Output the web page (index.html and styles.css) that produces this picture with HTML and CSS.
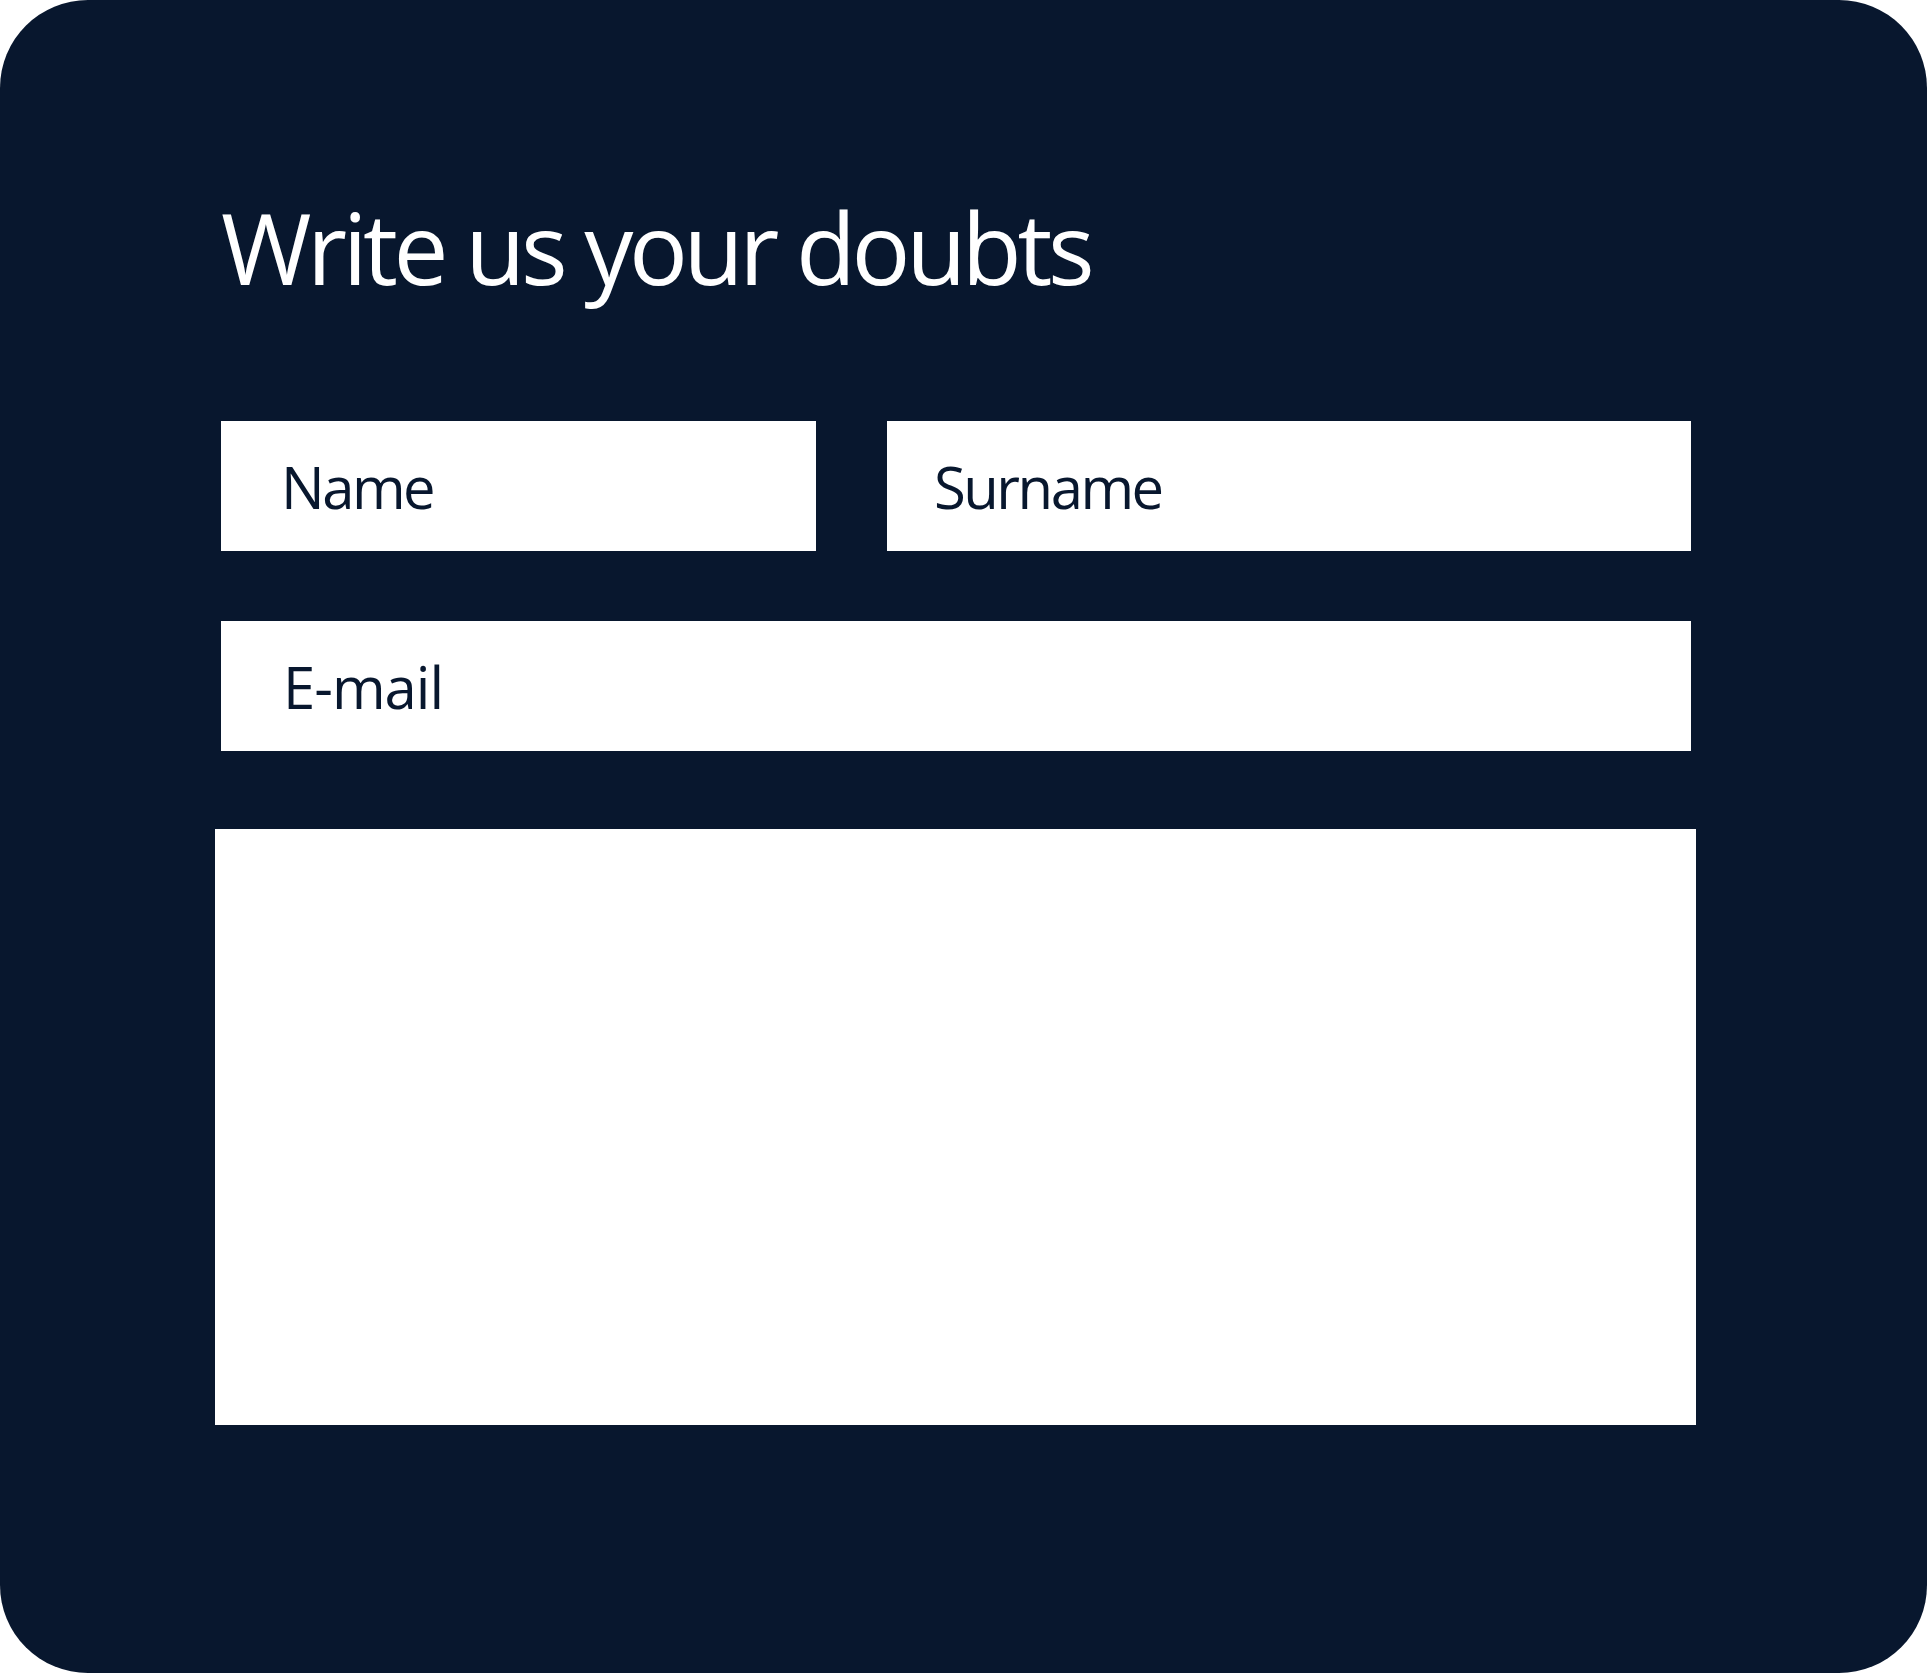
FILE: index.html
```html
<!DOCTYPE html>
<html lang="en">
<head>
<meta charset="utf-8">
<title>Write us your doubts</title>
<link rel="stylesheet" href="styles.css">
</head>
<body>
<main class="panel">
  <h1 class="title">Write us your doubts</h1>
  <form class="form">
    <div class="row">
      <input class="field field-name" type="text" placeholder="Name">
      <input class="field field-surname" type="text" placeholder="Surname">
    </div>
    <input class="field field-email" type="email" placeholder="E-mail">
    <textarea class="message"></textarea>
  </form>
</main>
</body>
</html>
```
FILE: styles.css
```css
html, body {
  margin: 0;
  padding: 0;
  background: #ffffff;
}
.panel {
  box-sizing: border-box;
  width: 1927px;
  height: 1673px;
  background: #08172e;
  border-radius: 88px;
  padding: 198px 236px 0 221px;
  font-family: "Open Sans", "Noto Sans", sans-serif;
}
.title {
  margin: 0;
  color: #ffffff;
  font-weight: 400;
  font-size: 98px;
  line-height: 1;
  letter-spacing: -4.4px;
}
.form {
  display: flex;
  flex-direction: column;
  margin-top: 125px;
}
.row {
  display: grid;
  grid-template-columns: 595px 1fr;
  column-gap: 71px;
}
.field {
  box-sizing: border-box;
  height: 130px;
  border: 0;
  border-radius: 0;
  background: #ffffff;
  color: #08172e;
  font-family: "Open Sans", "Noto Sans", sans-serif;
  font-size: 58px;
  letter-spacing: -2.5px;
  outline: none;
  margin: 0;
}
.field::placeholder {
  color: #08172e;
  opacity: 1;
}
.field-name { padding: 0 0 0 60px; width: 100%; }
.field-surname { padding: 0 0 0 47px; width: 100%; }
.field-email { padding: 0 0 0 62px; margin-top: 70px; width: 100%; letter-spacing: -1px; }
.message {
  box-sizing: border-box;
  display: block;
  margin: 78px -5px 0 -6px;
  height: 596px;
  border: 0;
  border-radius: 0;
  background: #ffffff;
  resize: none;
  outline: none;
}
```
